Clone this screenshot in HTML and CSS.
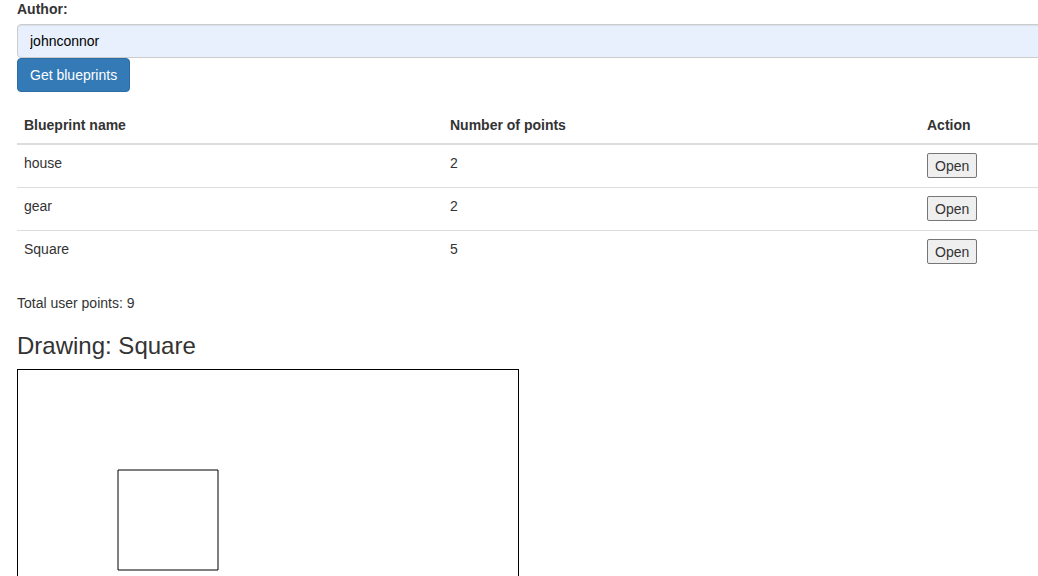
FILE: index.html
```html
<!DOCTYPE html>
<html>
<head>
<meta charset="utf-8">
<title>Blueprints</title>
<link rel="stylesheet" href="styles.css">
</head>
<body>
<div class="page">
  <label class="field-label" for="author">Author:</label>
  <input id="author" class="form-control" type="text" value="johnconnor">
  <button class="btn-primary" type="button">Get blueprints</button>

  <table class="bp-table">
    <thead>
      <tr>
        <th class="col-name">Blueprint name</th>
        <th class="col-points">Number of points</th>
        <th class="col-action">Action</th>
      </tr>
    </thead>
    <tbody>
      <tr><td>house</td><td>2</td><td><button class="btn-open" type="button">Open</button></td></tr>
      <tr><td>gear</td><td>2</td><td><button class="btn-open" type="button">Open</button></td></tr>
      <tr><td>Square</td><td>5</td><td><button class="btn-open" type="button">Open</button></td></tr>
    </tbody>
  </table>

  <p class="total">Total user points: 9</p>
  <h3 class="drawing-title">Drawing: Square</h3>
  <div class="canvas">
    <svg width="500" height="500" viewBox="0 0 500 500">
      <polygon points="100,100 200,100 200,200 100,200" fill="none" stroke="#000" stroke-width="1"/>
    </svg>
  </div>
</div>
</body>
</html>
```

FILE: styles.css
```css
html, body {
  margin: 0;
  padding: 0;
  overflow: hidden;
}
body {
  font-family: "Liberation Sans", Arial, sans-serif;
  font-size: 14px;
  line-height: 20px;
  color: #333;
  background: #fff;
}
.page {
  width: 1060px;
  padding-left: 17px;
  display: flex;
  flex-direction: column;
  align-items: flex-start;
}
.field-label {
  display: block;
  font-weight: bold;
  margin-top: -1px;
  margin-bottom: 5px;
}
.form-control {
  box-sizing: border-box;
  width: 100%;
  height: 34px;
  padding: 6px 12px;
  font: inherit;
  color: #000;
  background: #e8f0fe;
  border: 1px solid #ccc;
  border-radius: 4px;
  box-shadow: inset 0 1px 1px rgba(0,0,0,.075);
  margin: 0;
}
.btn-primary {
  box-sizing: border-box;
  height: 34px;
  padding: 6px 12px;
  font: inherit;
  color: #fff;
  background: #337ab7;
  border: 1px solid #2e6da4;
  border-radius: 4px;
  margin: 0;
}
.bp-table {
  width: 100%;
  border-collapse: collapse;
  border-spacing: 0;
  margin-top: 15px;
  margin-bottom: 20px;
}
.bp-table th, .bp-table td {
  padding: 8px 7px;
  text-align: left;
  vertical-align: top;
  line-height: 20px;
}
.bp-table th {
  font-weight: bold;
  vertical-align: bottom;
  border-bottom: 2px solid #ddd;
}
.bp-table td {
  border-top: 1px solid #ddd;
  height: 26px;
}
.bp-table tbody tr:first-child td {
  border-top: 0;
  height: 26px;
}
.col-name { width: 412px; }
.col-points { width: 463px; }
.btn-open {
  box-sizing: border-box;
  height: 25px;
  padding: 1px 7px;
  font: inherit;
  line-height: 20px;
  color: #333;
  background: #efefef;
  border: 1px solid #767676;
  border-radius: 2px;
  margin: 0;
}
.total {
  margin: 0;
}
.drawing-title {
  font-size: 24px;
  font-weight: 500;
  line-height: 26px;
  margin: 20px 0 10px;
}
.canvas {
  border: 1px solid #000;
  width: 500px;
  height: 500px;
}
.canvas svg {
  display: block;
}
```
